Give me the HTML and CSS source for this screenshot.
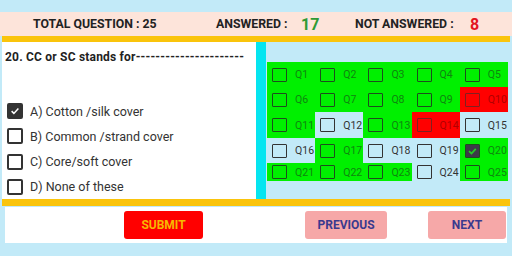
FILE: index.html
```html
<!DOCTYPE html>
<html lang="en">
<head>
  <meta charset="UTF-8">
  <title>Quiz</title>
  <link rel="stylesheet" href="styles.css">
</head>
<body>
  <div class="screen">
    <div class="header">
      <span class="total">TOTAL QUESTION : 25</span>
      <span class="lbl answered">ANSWERED :</span>
      <span class="num green">17</span>
      <span class="lbl notans">NOT ANSWERED :</span>
      <span class="num red">8</span>
    </div>
    <div class="bar"></div>

    <div class="main">
      <div class="question">
        <div class="qtext">20. CC or SC stands for----------------------</div>
        <div class="options">
          <div class="opt"><span class="box checked"><svg viewBox="0 0 16 16"><path d="M3.5 8.2l3 3 6-6.5" fill="none" stroke="#fff" stroke-width="2"/></svg></span>A) Cotton /silk cover</div>
          <div class="opt"><span class="box"></span>B) Common /strand cover</div>
          <div class="opt"><span class="box"></span>C) Core/soft cover</div>
          <div class="opt"><span class="box"></span>D) None of these</div>
        </div>
      </div>
      <div class="divider"></div>
      <div class="palette">
        <div class="grid" id="grid"></div>
      </div>
    </div>

    <div class="bar bottom"></div>
    <div class="footer">
      <button class="btn submit">SUBMIT</button>
      <button class="btn nav prev">PREVIOUS</button>
      <button class="btn nav next">NEXT</button>
    </div>
  </div>

  <script>
    // g = answered, r = marked for review, n = not answered
    const states = ['g','g','g','g','g','g','g','g','g','r','g','n','g','r','n','n','g','n','n','g','g','g','g','n','g'];
    const current = 19;
    const grid = document.getElementById('grid');
    states.forEach((s, i) => {
      const cell = document.createElement('div');
      cell.className = 'cell ' + s;
      const tick = i === current ? '<svg viewBox="0 0 14 14"><path d="M3 7.2l2.8 2.8 5-5.5" fill="none" stroke="#22d022" stroke-width="2"/></svg>' : '';
      cell.innerHTML = `<span class="cbox${i === current ? ' on' : ''}">${tick}</span><span class="qn">Q${i + 1}</span>`;
      grid.appendChild(cell);
    });
  </script>
</body>
</html>
```

FILE: styles.css
```css
body { margin: 0; background-color: #c2eaf8; font-family: Roboto, "Liberation Sans", Arial, sans-serif; }
.screen { width: 512px; height: 256px; padding-top: 12px; box-sizing: border-box; overflow: hidden; }

.header { height: 24px; background-color: #fde4da; display: flex; align-items: center; font-weight: bold; font-size: 12.3px; color: #222; padding-left: 33px; }
.total { width: 183px; }
.lbl.answered { width: 85px; }
.lbl.notans { width: 115px; }
.num { font-size: 16px; }
.num.green { color: #2f9a34; width: 54px; }
.num.red { color: #e3141e; }

.bar { height: 6px; background-color: #fac40c; margin: 0 2px; }
.bar.bottom { height: 7px; }

.main { display: flex; height: 157px; margin: 0 2px; }
.question { width: 254px; background-color: #fff; padding: 8px 0 0 3px; box-sizing: border-box; }
.qtext { font-size: 12px; font-weight: bold; letter-spacing: 0.2px; color: #222; white-space: nowrap; overflow: hidden; }
.options { margin-top: 39px; display: flex; flex-direction: column; gap: 8.7px; }
.opt { display: flex; align-items: center; height: 16.5px; font-size: 12.5px; color: #333; }
.box { width: 16px; height: 16px; border: 2px solid #333; border-radius: 2px; box-sizing: border-box; margin: 0 7px 0 2px; display: flex; }
.box.checked { background-color: #333; border-color: #333; }
.box svg { width: 100%; height: 100%; }

.divider { width: 10px; background-color: #05e5f0; }
.palette { flex: 1; padding: 20px 0 0 1px; }
.grid { display: grid; width: 241px; grid-template-columns: repeat(5, 1fr); grid-template-rows: 25px 25px 26px 25px 18px; }
.cell { display: flex; align-items: center; font-size: 10.5px; }
.cell.g { background-color: #00f000; color: #0f860f; }
.cell.r { background-color: #ff0000; color: #b00000; }
.cell.n { color: #333; }
.cbox { width: 15px; height: 14px; border: 1.5px solid #333; border-radius: 1px; box-sizing: border-box; margin: 0 8px 0 5px; display: flex; }
.cell.g .cbox { border-color: #1d4d1d; }
.cell.r .cbox { border-color: #802020; }
.cbox.on { background-color: #3d3a48; border-color: #3d3a48; }
.cbox svg { width: 100%; height: 100%; }

.footer { height: 36px; margin: 1px 5px 0; background-color: #fff; display: flex; align-items: center; }
.btn { height: 28px; border: none; border-radius: 3px; font-family: Roboto, "Liberation Sans", Arial, sans-serif; font-weight: bold; font-size: 12px; padding: 0; cursor: pointer; }
.submit { background-color: #ff0000; color: #f7b800; width: 79px; margin-left: 119px; }
.nav { background-color: #f6a8a8; color: #3a3a8e; }
.prev { width: 82px; margin-left: 102px; }
.next { width: 78px; margin-left: 41px; }
```
